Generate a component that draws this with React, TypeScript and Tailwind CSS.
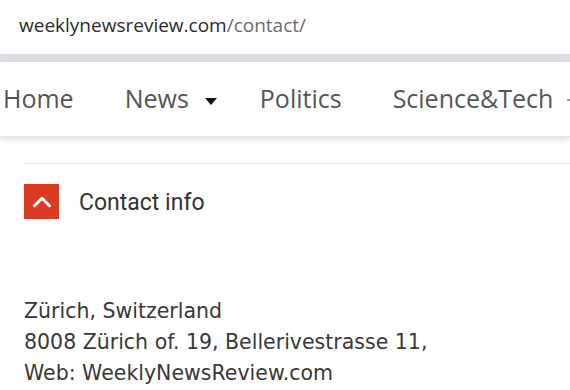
import { ChevronUp } from "lucide-react";

const navItems = ["Home", "News", "Politics", "Science&Tech"];

export default function App() {
  return (
    <div className="w-[570px] h-[390px] overflow-hidden bg-white">
      {/* address bar */}
      <div className="h-[54px] flex items-center pl-[19px] pb-[4px] font-['Open_Sans',sans-serif] text-[19px]">
        <span className="text-[#2b2b2b]">weeklynewsreview.com</span>
        <span className="text-[#6b6b6b]">/contact/</span>
      </div>
      <div className="h-[8px] bg-[#d9e0e8]" />

      {/* nav */}
      <nav className="h-[75px] bg-white flex items-center whitespace-nowrap font-['Open_Sans',sans-serif] text-[25px] text-[#555] shadow-[0_3px_6px_rgba(0,0,0,0.12)] border-b border-[#e6e6e6]">
        <span className="ml-[3px]">{navItems[0]}</span>
        <span className="ml-[51px] flex items-center">
          {navItems[1]}
          <svg width="12" height="7" viewBox="0 0 12 7" className="ml-[16px] mt-[4px]">
            <path d="M0 0h12L6 7z" fill="#111" />
          </svg>
        </span>
        <span className="ml-[43px]">{navItems[2]}</span>
        <span className="ml-[51px]">{navItems[3]}</span>
        <div className="ml-[14px] mt-[2px] w-[4px] h-[2px] bg-[#999] shrink-0" />
      </nav>

      {/* content */}
      <div className="pl-[24px] pt-[26px]">
        <div className="h-px bg-[#e8e8e8]" />
        <div className="flex items-center mt-[19px]">
          <div className="w-[35px] h-[35px] bg-[#d83a22] flex items-center justify-center">
            <ChevronUp size={30} strokeWidth={2.4} className="text-white" />
          </div>
          <span className="ml-[20px] mt-[3px] font-['Roboto',sans-serif] text-[23px] text-[#333]">
            Contact info
          </span>
        </div>

        <div className="mt-[75px] font-['DejaVu_Sans',sans-serif] text-[20.5px] leading-[31px] text-[#383838]">
          <p>Zürich, Switzerland</p>
          <p>8008 Zürich of. 19, Bellerivestrasse 11,</p>
          <p>Web: WeeklyNewsReview.com</p>
        </div>
      </div>
    </div>
  );
}
